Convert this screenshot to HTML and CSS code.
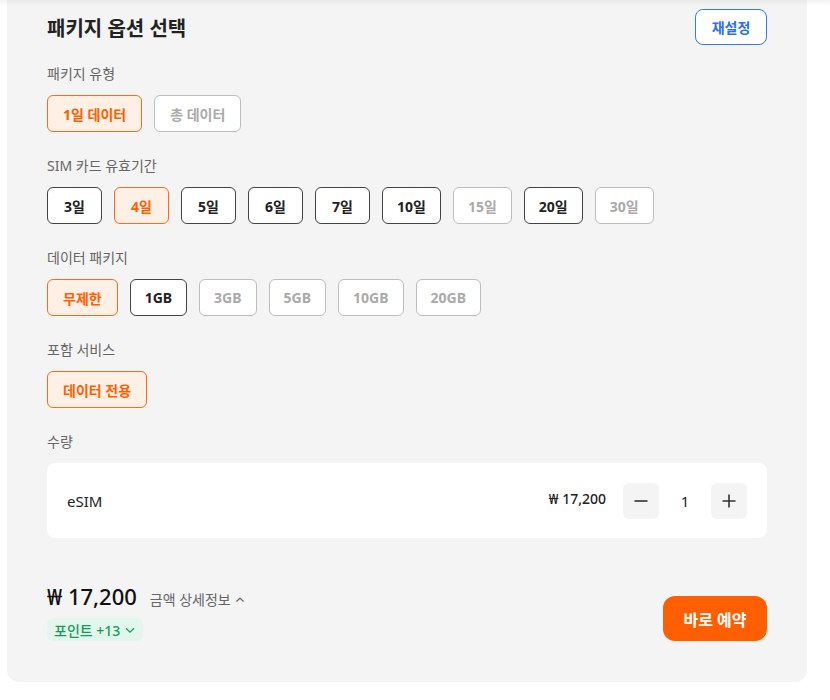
FILE: index.html
```html
<!DOCTYPE html>
<html lang="ko">
<head>
<meta charset="utf-8">
<title>패키지 옵션 선택</title>
<link rel="stylesheet" href="styles.css">
</head>
<body>
<div class="top-shade"></div>
<div class="panel">
  <div class="header">
    <h2 class="title">패키지 옵션 선택</h2>
    <button class="reset">재설정</button>
  </div>

  <div class="section first">
    <div class="label">패키지 유형</div>
    <div class="chips">
      <span class="chip wide selected">1일 데이터</span>
      <span class="chip wide disabled">총 데이터</span>
    </div>
  </div>

  <div class="section">
    <div class="label">SIM 카드 유효기간</div>
    <div class="chips">
      <span class="chip">3일</span>
      <span class="chip selected">4일</span>
      <span class="chip">5일</span>
      <span class="chip">6일</span>
      <span class="chip">7일</span>
      <span class="chip">10일</span>
      <span class="chip disabled">15일</span>
      <span class="chip">20일</span>
      <span class="chip disabled">30일</span>
    </div>
  </div>

  <div class="section">
    <div class="label">데이터 패키지</div>
    <div class="chips">
      <span class="chip wide selected">무제한</span>
      <span class="chip">1GB</span>
      <span class="chip disabled">3GB</span>
      <span class="chip disabled">5GB</span>
      <span class="chip disabled">10GB</span>
      <span class="chip disabled">20GB</span>
    </div>
  </div>

  <div class="section">
    <div class="label">포함 서비스</div>
    <div class="chips">
      <span class="chip wide selected">데이터 전용</span>
    </div>
  </div>

  <div class="section">
    <div class="label">수량</div>
    <div class="qty-card">
      <span class="item-name">eSIM</span>
      <div class="qty-right">
        <span class="item-price">₩ 17,200</span>
        <button class="qty-btn" aria-label="minus">
          <svg width="16" height="16" viewBox="0 0 16 16"><path d="M1.5 8h13" stroke="#333" stroke-width="1.6" fill="none"/></svg>
        </button>
        <span class="qty-val">1</span>
        <button class="qty-btn" aria-label="plus">
          <svg width="16" height="16" viewBox="0 0 16 16"><path d="M1.5 8h13M8 1.5v13" stroke="#333" stroke-width="1.6" fill="none"/></svg>
        </button>
      </div>
    </div>
  </div>

  <div class="footer">
    <div class="totals">
      <div class="price-line">
        <span class="total">₩ 17,200</span>
        <span class="detail">금액 상세정보
          <svg width="10" height="10" viewBox="0 0 10 10"><path d="M1.5 6.5L5 3l3.5 3.5" stroke="#666" stroke-width="1.2" fill="none"/></svg>
        </span>
      </div>
      <span class="points">포인트 +13
        <svg width="12" height="12" viewBox="0 0 12 12"><path d="M2 4.2l4 4 4-4" stroke="#139c5c" stroke-width="1.3" fill="none"/></svg>
      </span>
    </div>
    <button class="book">바로 예약</button>
  </div>
</div>
</body>
</html>
```

FILE: styles.css
```css
html, body {
  margin: 0;
  padding: 0;
  background: #ffffff;
}
body {
  font-family: "Noto Sans", "Noto Sans CJK KR", sans-serif;
  color: #222;
  position: relative;
}
.top-shade {
  position: absolute;
  left: 0;
  top: 0;
  width: 100%;
  height: 6px;
  background: linear-gradient(rgba(0,0,0,0.05), rgba(0,0,0,0));
  pointer-events: none;
}
.panel {
  margin-left: 7px;
  width: 800px;
  box-sizing: border-box;
  background: #f4f4f4;
  border-radius: 0 0 12px 12px;
  padding: 9px 40px 41px;
}
.header {
  display: flex;
  justify-content: space-between;
  align-items: center;
  height: 36px;
}
.title {
  margin: 0;
  font-size: 20px;
  font-weight: 700;
  color: #222;
}
.reset {
  width: 72px;
  height: 36px;
  box-sizing: border-box;
  border: 1px solid #2f7cf6;
  background: #fff;
  border-radius: 8px;
  color: #2a6ef2;
  font-family: inherit;
  font-size: 14px;
  font-weight: 700;
  padding: 0;
}
.section {
  margin-top: 23px;
}
.section.first {
  margin-top: 18px;
}
.label {
  font-size: 14px;
  line-height: 20px;
  padding-top: 1px;
  color: #666;
}
.chips {
  display: flex;
  gap: 12px;
  margin-top: 11px;
}
.chip {
  box-sizing: border-box;
  height: 37px;
  min-width: 55px;
  padding: 0 14px;
  display: inline-flex;
  align-items: center;
  justify-content: center;
  border: 1px solid #444;
  border-radius: 6px;
  background: #fff;
  color: #222;
  font-size: 14px;
  font-weight: 700;
}
.chip.wide {
  padding: 0 15px;
}
.chip.selected {
  border-color: #ff6a1a;
  background: #fff0e6;
  color: #ff5f00;
}
.chip.disabled {
  border-color: #bdbdbd;
  color: #aaa;
}
.qty-card {
  margin-top: 11px;
  height: 75px;
  box-sizing: border-box;
  background: #fff;
  border-radius: 8px;
  padding: 0 20px;
  display: flex;
  align-items: center;
  justify-content: space-between;
}
.item-name {
  font-size: 15px;
  color: #222;
  margin-top: 1px;
}
.qty-right {
  display: flex;
  align-items: center;
}
.item-price {
  font-size: 14px;
  font-weight: 500;
  color: #222;
  margin-right: 17px;
  margin-top: -4px;
}
.qty-btn {
  width: 36px;
  height: 36px;
  border: none;
  border-radius: 6px;
  background: #f4f4f4;
  padding: 0;
  display: flex;
  align-items: center;
  justify-content: center;
}
.qty-val {
  width: 52px;
  text-align: center;
  font-size: 15px;
  color: #222;
}
.footer {
  margin-top: 43px;
  display: flex;
  justify-content: space-between;
  align-items: flex-end;
}
.totals {
  display: flex;
  flex-direction: column;
  align-items: flex-start;
}
.price-line {
  display: flex;
  align-items: baseline;
  height: 30px;
  line-height: 30px;
}
.total {
  font-size: 22px;
  font-weight: 500;
  color: #111;
}
.detail {
  margin-left: 13px;
  font-size: 14px;
  color: #666;
  display: inline-flex;
  align-items: center;
  gap: 4px;
}
.points {
  margin-top: 7px;
  height: 23px;
  box-sizing: border-box;
  padding: 0 7px;
  border-radius: 6px;
  background: #e3f6ec;
  color: #139c5c;
  font-size: 14px;
  font-weight: 500;
  display: inline-flex;
  align-items: center;
  gap: 4px;
}
.book {
  width: 104px;
  height: 45px;
  border: none;
  border-radius: 12px;
  background: #ff5f00;
  color: #fff;
  font-family: inherit;
  font-size: 16px;
  font-weight: 700;
  padding: 0;
}
```
